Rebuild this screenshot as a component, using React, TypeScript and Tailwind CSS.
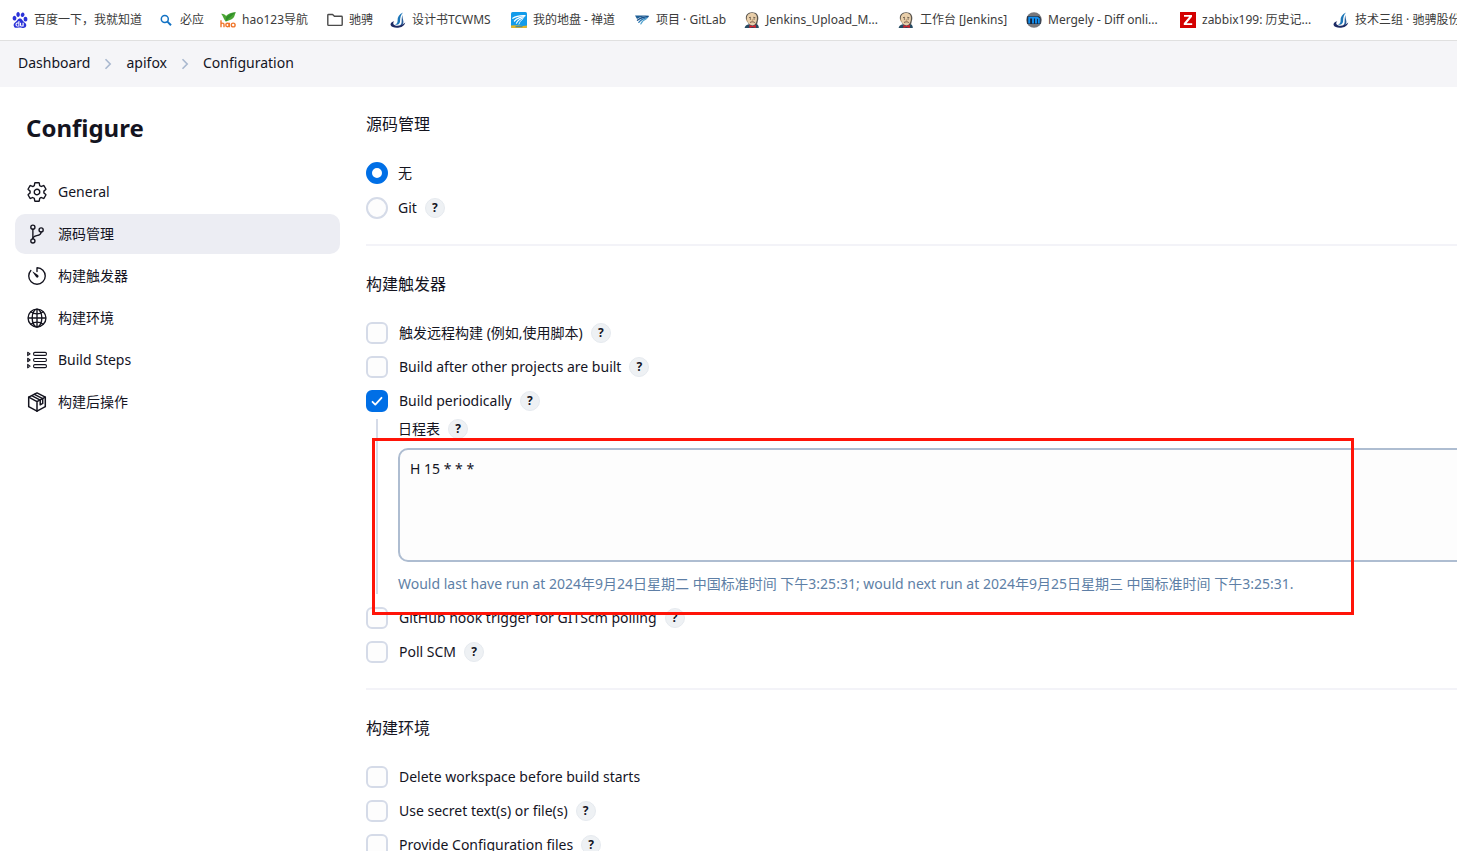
import { useState, type ReactNode } from "react";
import { SiBaidu } from "react-icons/si";
import {
  IoSettingsOutline,
  IoGitBranchOutline,
  IoTimerOutline,
  IoGlobeOutline,
} from "react-icons/io5";

/* ---------- favicons ---------- */

function SearchIcon() {
  return (
    <svg viewBox="0 0 16 16" className="size-4" fill="none" stroke="#1272c4" strokeWidth="1.5">
      <circle cx="6.8" cy="7" r="3.5" />
      <path d="M9.4 9.6 13 13.2" strokeWidth="2" />
    </svg>
  );
}

function HaoIcon() {
  return (
    <svg viewBox="0 0 16 16" className="size-4">
      <path d="M1.2 1.8C3.4 1.600 5.200 2.600 6 4 8 1.600 11.600 .4 15.800 .2 14.600 2.600 14.800 4.400 13 6.200 10.800 8.400 7.600 8.600 5.800 9.400 4 8 3.200 4.200 1.200 1.800Z" fill="#4ba634" />
      <path d="M6 5.400C8 2.800 11.600 1 15.800 .2 12 3.400 9.200 5.800 5.800 9.400Z" fill="#2f8f2a" />
      <g fill="none" stroke="#f0762b" strokeWidth="1.400">
        <path d="M1 8.300V15.200M1 12.200C1.300 10.800 4 10.600 4 12.400V15.200" />
        <circle cx="7.500" cy="13" r="1.700" />
        <path d="M9.300 10.800V15.200" />
        <circle cx="13.200" cy="13" r="1.900" />
      </g>
    </svg>
  );
}

function FolderIcon() {
  return (
    <svg viewBox="0 0 16 16" className="size-4" fill="none" stroke="#4a4a4a" strokeWidth="1.400" strokeLinejoin="round">
      <path d="M.8 3.200Q.8 2.500 1.500 2.500H5.600L7.400 4.300H14.400Q15.200 4.300 15.200 5V12.600Q15.200 13.400 14.400 13.400H1.600Q.8 13.400 .8 12.600Z" />
    </svg>
  );
}

function SailIcon() {
  return (
    <svg viewBox="0 0 16 16" className="size-4">
      <path d="M13 .4C9 2.200 7.400 5 7.600 8.200 7.700 10.400 7 12 5 12.400 8.200 13.400 10.200 11.400 10.100 8.400 10 5.600 11 2.800 13 .4Z" fill="#1b76b8" />
      <path d="M12.600 3C11.400 5.400 11.800 8 11.600 10.200 11.400 12 10.600 13 9.200 13.600 12.200 13.600 13.800 12 13.400 9.400 13.100 7.200 12.200 5.600 12.600 3Z" fill="#2a5f9c" />
      <path d="M4.200 9.300C1.600 9.900 .2 11.400 .6 13 1.200 15.400 5.600 16.200 9.200 15.600 12.400 15 14.800 12.800 15.300 10.400 13 12.800 8.600 14.200 5.400 13.400 3 12.900 2.600 10.800 4.200 9.300Z" fill="#1c2a63" />
    </svg>
  );
}

function ZentaoIcon() {
  return (
    <svg viewBox="0 0 16 16" className="size-4">
      <rect width="16" height="16" rx="1.500" fill="#129bea" />
      <path d="M0 13.600Q4 12.800 8 13.600T16 13.600V15A1 1 0 0 1 15 16H1A1 1 0 0 1 0 15Z" fill="#e0b52a" />
      <path d="M4.500 14.200H11.500V15.200H4.500Z" fill="#2f7fb0" />
      <g fill="none" stroke="#fff" strokeLinecap="round">
        <path d="M1.800 6.200C5 4 9.500 3.400 14 3.600" strokeWidth="1.300" />
        <path d="M3.400 9C5.600 6.600 9.500 5 13.200 4.600" strokeWidth="1.200" />
        <path d="M5.400 11.200C6.800 8.600 9.400 6.800 12.400 5.800" strokeWidth="1.100" />
        <path d="M8 12C8.600 10 9.800 8.400 11.600 7.200" strokeWidth=".9" />
      </g>
    </svg>
  );
}

function WingIcon() {
  return (
    <svg viewBox="0 0 16 16" className="size-4">
      <path d="M1 3.400H15.400C10.600 4 6.400 4.600 3 7Z" fill="#1f5f95" />
      <g fill="none" strokeLinecap="round">
        <path d="M3.400 8.200C6 6.200 9.400 5 14.200 4.500" stroke="#17508a" strokeWidth="1.300" />
        <path d="M4.800 10.400C6.600 7.900 9.600 6.300 13.400 5.600" stroke="#2b78b4" strokeWidth="1.200" />
        <path d="M6.800 12C7.800 9.600 9.800 7.800 12.400 6.800" stroke="#54a4cf" strokeWidth="1.200" />
      </g>
    </svg>
  );
}

function JenkinsIcon() {
  return (
    <svg viewBox="0 0 16 16" className="size-4">
      <path d="M.6 16C.8 13.800 2.600 13 5 12.200L11 11.400C13.800 11.800 14.800 13.200 14.800 16Z" fill="#274b63" />
      <path d="M2 7.600C1 3 3.800 .4 8 .2 12.600 .2 14.800 3 14.200 7.400L13 12.400 5 12.400Z" fill="#5a554e" />
      <path d="M2.800 6.800C2.600 3.200 4.800 1 8 1 11.800 1 13.400 3.600 12.900 7.200 12.600 10.400 11 13.400 8.600 13.400 5.600 13.400 3.200 10.400 2.800 6.800Z" fill="#e9cfaa" />
      <path d="M3 7.600C1.400 7.400 1.600 9.800 3.600 9.800Z" fill="#e3bf96" />
      <path d="M5 5.600 7 5.300M9.200 5.300 11.400 5.700" stroke="#5a4a3c" strokeWidth=".8" />
      <path d="M5.900 7H6.900M9.600 7H10.600" stroke="#2b2622" strokeWidth="1" />
      <path d="M8.300 7V8.800L9.300 9" stroke="#b58b62" strokeWidth=".7" fill="none" />
      <path d="M6 10.500C7.200 9.600 9.800 9.600 10.800 10.600" stroke="#6b4b3a" strokeWidth=".9" fill="none" />
      <path d="M5.400 13 8.400 14 11.800 12.800V16L8.400 15 5.400 16Z" fill="#d8242c" />
    </svg>
  );
}

function MergelyIcon() {
  return (
    <svg viewBox="0 0 16 16" className="size-4">
      <circle cx="8" cy="8" r="7.800" fill="#77777b" />
      <path d="M1.200 12V4.200H12.600L14.600 5.800V12Z" fill="#16243a" />
      <path d="M3.200 11.400V5.600H7V11.400M7 5.600H11.200L12.800 6.800V11.400M10 11.400V5.600" fill="none" stroke="#1590f0" strokeWidth="1.900" />
    </svg>
  );
}

function ZabbixIcon() {
  return (
    <svg viewBox="0 0 16 16" className="size-4">
      <rect width="16" height="16" fill="#d40000" />
      <path d="M4 3H12V4.700L6.600 11.200H12.200V13H3.800V11.300L9.200 4.800H4Z" fill="#fff" />
    </svg>
  );
}

/* ---------- side navigation icons ---------- */

function StepsIcon() {
  return (
    <svg viewBox="0 0 24 24" className="size-6" fill="none" stroke="currentColor" strokeWidth="1.100" strokeLinejoin="round">
      <path d="M2.700 4.200 5.100 5.900 2.700 7.600ZM2.700 10.300 5.100 12 2.700 13.700ZM2.700 16.400 5.100 18.100 2.700 19.800Z" />
      <rect x="8.600" y="4.400" width="12.800" height="3" rx="1.200" />
      <rect x="8.600" y="10.500" width="12.800" height="3" rx="1.200" />
      <rect x="8.600" y="16.600" width="12.800" height="3" rx="1.200" />
    </svg>
  );
}

function PackageIcon() {
  return (
    <svg viewBox="0 0 24 24" className="size-6" fill="none" stroke="currentColor" strokeWidth="1.500" strokeLinejoin="round" strokeLinecap="round">
      <path d="M12 2.900 20.300 7.200V16.700L12 21.200 3.700 16.700V7.200Z" />
      <path d="M3.700 7.200 12 11.600 20.300 7.200M12 11.600V21.200" />
      <path d="M9.400 4.400 17.700 8.700V13.400L15.200 14.800V10.100L6.700 5.700" />
    </svg>
  );
}

/* ---------- shared controls ---------- */

function HelpButton({ topic }: { topic: string }) {
  return (
    <button
      type="button"
      aria-label={`Help for feature: ${topic}`}
      className="flex size-5 shrink-0 items-center justify-center rounded-full border border-[#e6eaef] bg-[#eef1f4] text-xs leading-none font-bold text-[#14141f]"
    >
      ?
    </button>
  );
}

function CheckRow({ id, label, help = true, checked = false }: { id: string; label: string; help?: boolean; checked?: boolean }) {
  const [on, setOn] = useState(checked);
  return (
    <div className="flex h-[22px] items-center gap-2">
      <label htmlFor={id} className="relative flex items-center gap-[11px]">
        <input
          id={id}
          type="checkbox"
          checked={on}
          onChange={() => setOn(!on)}
          className="size-[22px] shrink-0 appearance-none rounded-md border-2 border-[#d5dbe8] bg-[#fdfdfd] checked:border-[#006fe6] checked:bg-[#006fe6]"
        />
        {on && (
          <svg viewBox="0 0 22 22" className="pointer-events-none absolute top-0 left-0 size-[22px]" fill="none" stroke="#fff" strokeWidth="1.800" strokeLinecap="round" strokeLinejoin="round">
            <path d="M6.500 11.800 9.300 14.600 15.500 7.800" />
          </svg>
        )}
        {label}
      </label>
      {help && <HelpButton topic={label} />}
    </div>
  );
}

function RadioRow({ id, label, help = false, checked = false }: { id: string; label: string; help?: boolean; checked?: boolean }) {
  return (
    <div className="flex h-[22px] items-center gap-2">
      <label htmlFor={id} className="flex items-center gap-[10px]">
        <input
          id={id}
          type="radio"
          name="scm"
          defaultChecked={checked}
          className="size-[22px] shrink-0 appearance-none rounded-full border-2 border-[#d5dbe8] bg-[#fdfdfd] checked:border-[6px] checked:border-[#006fe6] checked:bg-white"
        />
        {label}
      </label>
      {help && <HelpButton topic={label} />}
    </div>
  );
}

function Section({ title, children }: { title: string; children: ReactNode }) {
  return (
    <section className="border-b-2 border-[#f3f3f8] pb-[25px] last:border-0">
      <h2 className="py-[26px] text-base leading-6">{title}</h2>
      {children}
    </section>
  );
}

/* ---------- data ---------- */

const bookmarks = [
  { label: "百度一下，我就知道", width: "w-[146px]", icon: <SiBaidu className="size-4 text-[#2b32d8]" /> },
  { label: "必应", width: "w-[62px]", icon: <SearchIcon /> },
  { label: "hao123导航", width: "w-[107px]", icon: <HaoIcon /> },
  { label: "驰骋", width: "w-[63px]", icon: <FolderIcon /> },
  { label: "设计书TCWMS", width: "w-[121px]", icon: <SailIcon /> },
  { label: "我的地盘 - 禅道", width: "w-[123px]", icon: <ZentaoIcon /> },
  { label: "项目 · GitLab", width: "w-[110px]", icon: <WingIcon /> },
  { label: "Jenkins_Upload_M...", width: "w-[154px]", icon: <JenkinsIcon /> },
  { label: "工作台 [Jenkins]", width: "w-[128px]", icon: <JenkinsIcon /> },
  { label: "Mergely - Diff onli...", width: "w-[154px]", icon: <MergelyIcon /> },
  { label: "zabbix199: 历史记...", width: "w-[153px]", icon: <ZabbixIcon /> },
  { label: "技术三组 · 驰骋股份", width: "w-[153px]", icon: <SailIcon /> },
];

const navItems = [
  { label: "General", icon: <IoSettingsOutline className="m-px size-[22px]" /> },
  { label: "源码管理", icon: <IoGitBranchOutline className="m-px size-[22px]" />, active: true },
  { label: "构建触发器", icon: <IoTimerOutline className="m-px size-[22px]" /> },
  { label: "构建环境", icon: <IoGlobeOutline className="m-px size-[22px]" /> },
  { label: "Build Steps", icon: <StepsIcon /> },
  { label: "构建后操作", icon: <PackageIcon /> },
];

const crumbs = ["Dashboard", "apifox", "Configuration"];

export default function App() {
  return (
    <div className="flex h-screen flex-col overflow-hidden bg-white font-['Noto_Sans','Noto_Sans_CJK_SC',sans-serif] text-sm leading-5 text-[#14141f]">
      <nav aria-label="Bookmarks" className="flex h-[41px] shrink-0 items-center overflow-hidden border-b border-[#e0e0e0] pl-3 text-xs text-[#3b3b3b]">
        {bookmarks.map((b) => (
          <a key={b.label} href="#" className={`flex shrink-0 items-center gap-[6px] whitespace-nowrap ${b.width}`}>
            {b.icon}
            {b.label}
          </a>
        ))}
      </nav>

      <nav aria-label="Breadcrumb" className="h-[46px] shrink-0 bg-[#f5f5f8] pl-[18px]">
        <ol className="flex h-11 items-center">
          {crumbs.map((c, i) => (
            <li key={c} className="flex items-center">
              {i > 0 && (
                <svg viewBox="0 0 8 12" className="mx-[14px] mt-[2px] h-3 w-2" fill="none" stroke="#a9b8cf" strokeWidth="1.600">
                  <path d="M1.500 1.200 6.200 6 1.500 10.800" />
                </svg>
              )}
              <a href="#">{c}</a>
            </li>
          ))}
        </ol>
      </nav>

      <div className="-mt-px flex min-h-0 flex-1">
        <aside className="w-[340px] shrink-0 pl-[15px]">
          <h1 className="pt-6 pb-[26px] pl-[11px] text-2xl leading-9 font-bold">Configure</h1>
          <nav aria-label="Sections" className="flex flex-col gap-[2px]">
            {navItems.map((n) => (
              <a
                key={n.label}
                href="#"
                className={`flex h-10 items-center gap-[9px] rounded-[10px] pl-[10px] ${n.active ? "bg-[#ecedf3]" : ""}`}
              >
                {n.icon}
                {n.label}
              </a>
            ))}
          </nav>
        </aside>

        <main className="min-w-0 flex-1 pl-[26px]">
          <Section title="源码管理">
            <div className="flex flex-col gap-[13px]">
              <RadioRow id="scm-none" label="无" checked />
              <RadioRow id="scm-git" label="Git" help />
            </div>
          </Section>

          <Section title="构建触发器">
            <div className="flex flex-col gap-3">
              <CheckRow id="remote" label="触发远程构建 (例如,使用脚本)" />
              <CheckRow id="after" label="Build after other projects are built" />
              <CheckRow id="periodic" label="Build periodically" checked />
            </div>
            <div className="relative mt-[7px] mb-[13px] ml-[10px] border-l-2 border-[#d5dbe8] pl-5">
              <div className="flex items-center gap-2">
                <label htmlFor="spec">日程表</label>
                <HelpButton topic="日程表" />
              </div>
              <textarea
                id="spec"
                defaultValue="H 15 * * *"
                className="mt-[9px] -mr-4 block h-[114px] w-[calc(100%+16px)] resize-none rounded-[10px] border-2 border-[#aebdd1] bg-[#fdfdfd] px-[10px] py-[9px] text-sm leading-5"
              />
              <p className="mt-3 whitespace-nowrap text-[#5e7fa6]">
                Would last have run at 2024年9月24日星期二 中国标准时间 下午3:25:31; would next run at 2024年9月25日星期三 中国标准时间 下午3:25:31.
              </p>
              <div className="pointer-events-none absolute top-[19px] -left-[6px] z-10 h-[177px] w-[982px] border-[3px] border-[#ff1408]" />
            </div>
            <div className="flex flex-col gap-3">
              <CheckRow id="github" label="GitHub hook trigger for GITScm polling" />
              <CheckRow id="poll" label="Poll SCM" />
            </div>
          </Section>

          <Section title="构建环境">
            <div className="flex flex-col gap-3">
              <CheckRow id="wipe" label="Delete workspace before build starts" help={false} />
              <CheckRow id="secret" label="Use secret text(s) or file(s)" />
              <CheckRow id="files" label="Provide Configuration files" />
            </div>
          </Section>
        </main>
      </div>
    </div>
  );
}
